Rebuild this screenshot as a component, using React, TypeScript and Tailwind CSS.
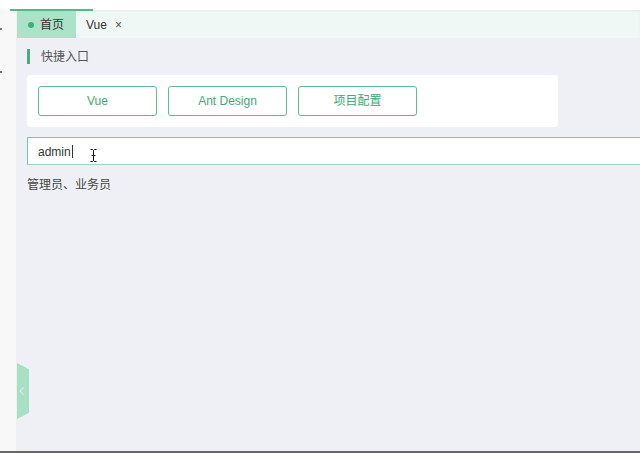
import React from "react";

export default function App() {
  return (
    <div
      className="relative w-[640px] h-[453px] bg-white flex flex-col overflow-hidden"
      style={{ fontFamily: '"Liberation Sans", "Noto Sans CJK SC", sans-serif' }}
    >
      <div className="h-[10px] bg-white shrink-0" />
      <div className="flex flex-1 min-h-0">
        <div className="w-[17px] shrink-0 bg-[#f8f8f8] border-r border-[#f0f0f2] relative">
          <div className="absolute left-0 top-[18px] w-[2px] h-[2px] bg-[#777]" />
          <div className="absolute left-0 top-[61px] w-[2px] h-[2px] bg-[#777]" />
        </div>
        <div className="flex-1 flex flex-col min-w-0">
          <div className="h-[28px] shrink-0 bg-[#eff8f5] flex items-stretch shadow-[inset_0_1px_2px_rgba(0,0,0,0.06)]">
            <div className="w-[59px] bg-[#ace3c8] flex items-center pl-[11px] pt-[2px] gap-[6px] text-[12px] text-[#333]">
              <span className="w-[6px] h-[6px] rounded-full bg-[#3fae7a]" />
              <span>首页</span>
            </div>
            <div className="flex items-center pl-[10px] pt-[2px] gap-[8px] text-[12px] text-[#333]">
              <span>Vue</span>
              <span className="text-[12px] text-[#555]">×</span>
            </div>
          </div>
          <div className="flex-1 bg-[#eef0f5] pl-[10px] pt-[11px]">
            <div className="flex items-center h-[15px]">
              <div className="w-[3px] h-[15px] bg-[#4aab7c]" />
              <span className="ml-[11px] text-[12px] text-[#555]">快捷入口</span>
            </div>
            <div className="mt-[11px] w-[531px] h-[52px] bg-white rounded-[4px] pl-[11px] pt-[11px] flex gap-[11px]">
              {["Vue", "Ant Design", "项目配置"].map((t) => (
                <div
                  key={t}
                  className="w-[119px] h-[30px] border border-[#5fba8f] rounded-[3px] flex items-center justify-center text-[12px] text-[#3fa874]"
                >
                  {t}
                </div>
              ))}
            </div>
            <div className="relative mt-[10px] w-[630px] h-[28px] bg-white border border-[#78c6a2] border-b-[#9ad8bb] flex items-center pl-[10px] pt-[1px] text-[12px] text-[#333]">
              <span>admin</span>
              <span className="ml-[1px] w-[1px] h-[13px] bg-[#333]" />
              <svg className="absolute left-[62px] top-[11px]" width="7" height="13" viewBox="0 0 7 13">
                <path d="M0.5 0.5 H2.5 L3.5 1.5 L4.5 0.5 H6.5 M3.5 1.5 V11.5 M0.5 12.5 H2.5 L3.5 11.5 L4.5 12.5 H6.5 M1.5 6.5 H5.5" stroke="#111" strokeWidth="1" fill="none" />
              </svg>
            </div>
            <div className="mt-[13px] text-[12px] text-[#444] leading-[14px]">管理员、业务员</div>
          </div>
        </div>
      </div>
      <div className="h-[2px] bg-[#666] shrink-0" />
      <div className="absolute left-[10px] top-[9px] w-[83px] h-[2px] bg-[#4dbb8a]" />
      <div
        className="absolute left-[17px] top-[363px] w-[12px] h-[56px] bg-[#a8e0c6] flex items-center justify-center"
        style={{ clipPath: "polygon(0 0, 100% 11%, 100% 89%, 0 100%)" }}
      >
        <svg width="6" height="8" viewBox="0 0 6 8" className="-ml-[2px]">
          <path d="M4.5 0.5 L1 4 L4.5 7.5" stroke="white" strokeWidth="1" fill="none" />
        </svg>
      </div>
    </div>
  );
}
